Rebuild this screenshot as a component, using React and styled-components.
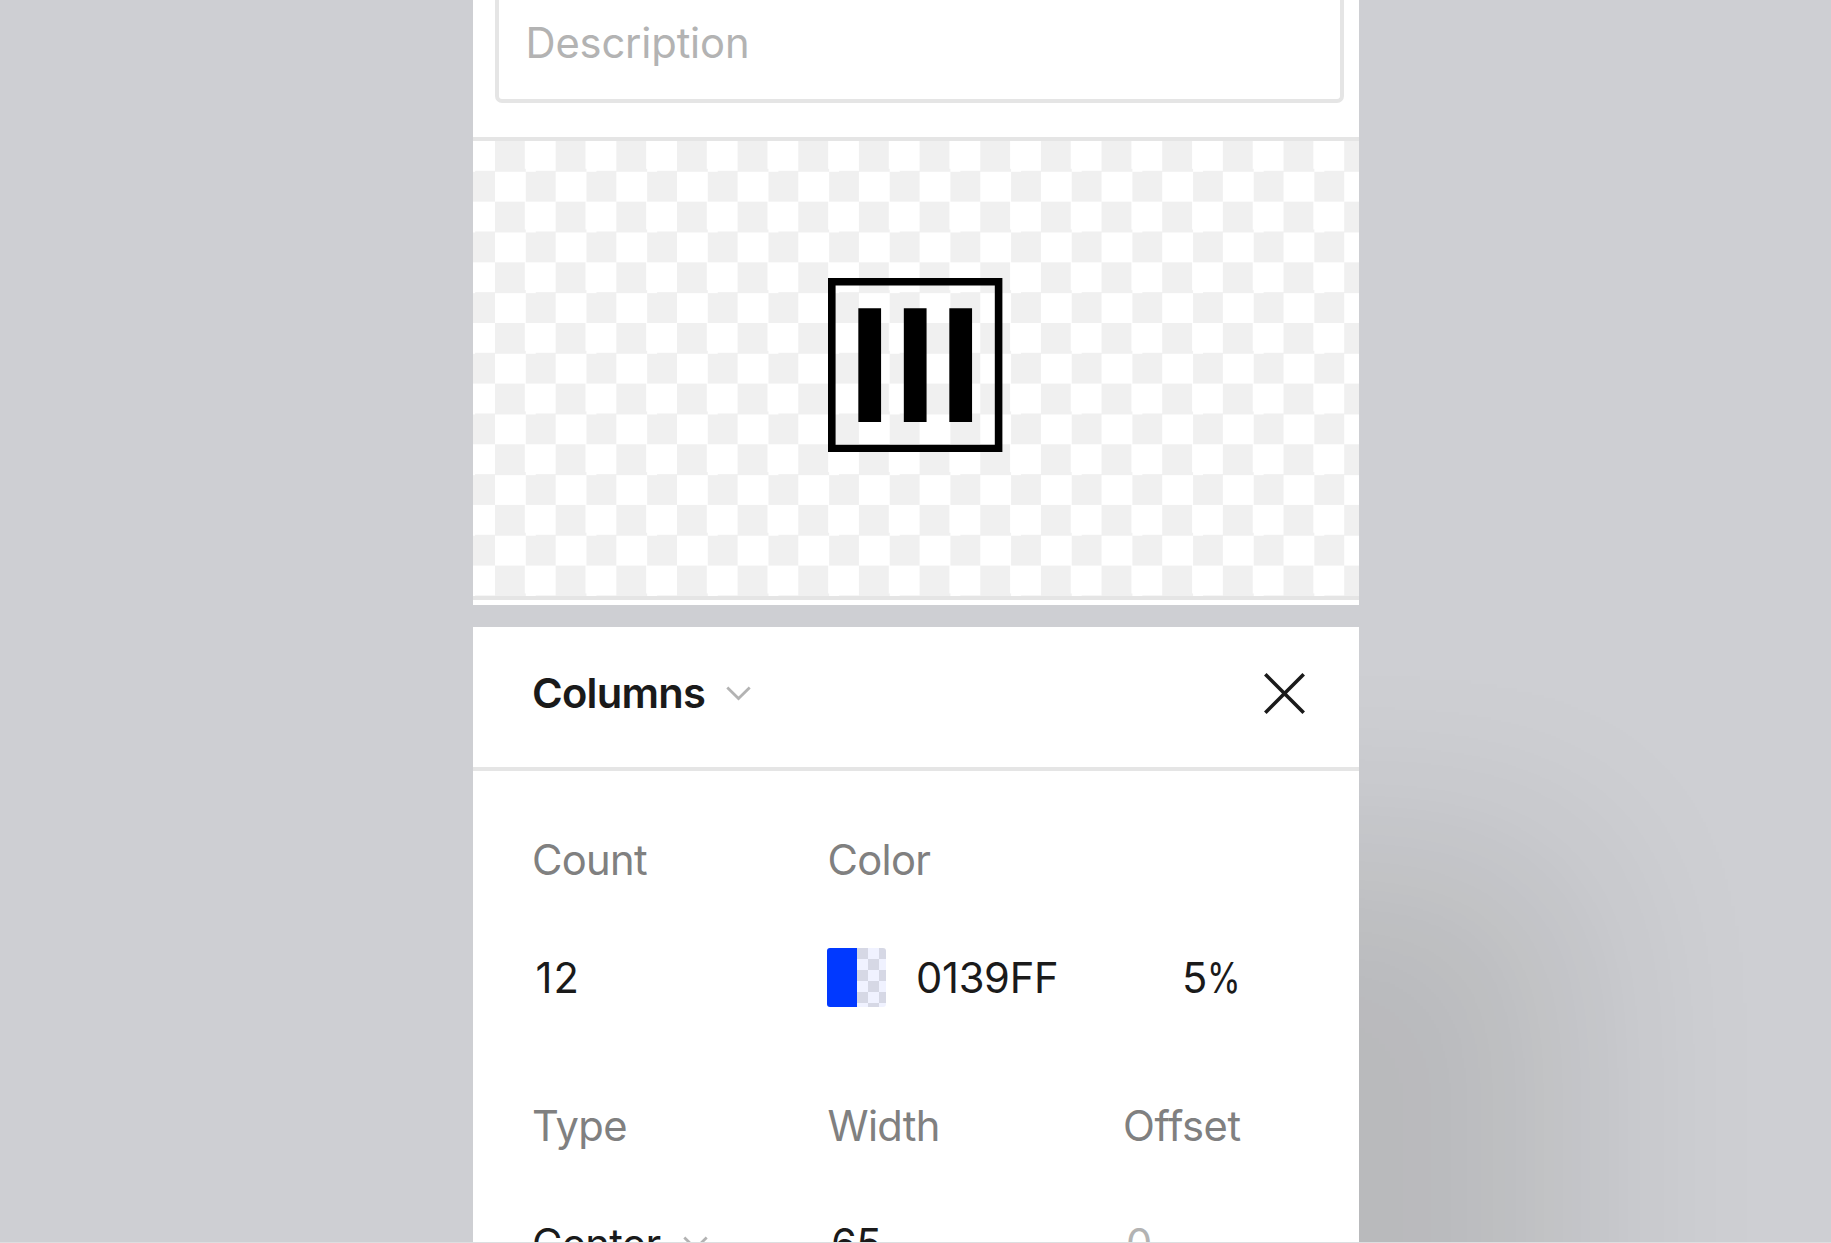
import React from "react";
import styled, { createGlobalStyle } from "styled-components";

const Global = createGlobalStyle`
  html, body { margin: 0; background: #cecfd3; }
  * { box-sizing: border-box; }
`;

const Page = styled.main`
  height: 1243px;
  overflow: hidden;
  display: flex;
  flex-direction: column;
  align-items: center;
  gap: 22.6px;
  background: #cecfd3;
  border-bottom: 1px solid #dddee0;
  font-family: Inter, "Liberation Sans", sans-serif;
  font-size: 41.7px;
  line-height: 60px;
  color: #1a1a1a;
`;

const Panel = styled.section`
  width: 886px;
  flex: none;
  background: #fff;
`;

const AssetPanel = styled(Panel)`
  height: 604.7px;
`;

const GridPanel = styled(Panel)`
  height: 640px;
  letter-spacing: -0.7px;
  box-shadow: 212px 225px 190px rgba(20, 20, 0, 0.108);
`;

const FieldArea = styled.div`
  height: 137px;
  padding: 0 15px 34px 22px;
`;

const DescriptionField = styled.div`
  height: 103px;
  padding: 13px 27px 0;
  border: 4px solid #e5e5e5;
  border-top: 0;
  border-radius: 0 0 7px 7px;
  color: #b3b3b3;
  letter-spacing: -0.15px;
`;

const Preview = styled.div`
  height: 463px;
  padding-bottom: 7px;
  display: flex;
  align-items: center;
  justify-content: center;
  border-top: 4px solid #e5e5e5;
  border-bottom: 4px solid #e5e5e5;
  background: repeating-conic-gradient(#fff 0 25%, #f0f0f0 0 50%) 22px 0 / 60.667px 60.667px;
`;

const Header = styled.header`
  height: 143.5px;
  padding: 0 54px 8px 59.5px;
  display: flex;
  align-items: center;
  border-bottom: 4px solid #e5e5e5;
`;

const Title = styled.h2`
  margin: 0 auto 0 0;
  display: flex;
  align-items: center;
  gap: 21px;
  font-size: inherit;
  font-weight: 600;
  letter-spacing: -0.75px;
`;

const Settings = styled.div`
  display: flex;
  flex-direction: column;
  gap: 88px;
  padding: 59px 0 0 59px;
`;

const Group = styled.div`
  display: grid;
  grid-template-columns: 295.5px 295.5px 1fr;
  grid-auto-rows: 60px;
  row-gap: 58px;
`;

const Label = styled.span`
  padding-left: 0.5px;
  color: #808080;
  grid-column: ${(p) => (p.$wide ? "span 2" : "auto")};
  letter-spacing: ${(p) => p.$tracking || -0.7}px;
`;

const Value = styled.span`
  display: flex;
  align-items: center;
  padding-left: ${(p) => p.$inset || 0}px;
  gap: ${(p) => p.$gap || 0}px;
  color: ${(p) => (p.$muted ? "#b3b3b3" : "#1a1a1a")};
`;

const Count = styled(Value)`
  letter-spacing: 1px;
`;

const ColorValue = styled(Value)`
  grid-column: span 2;
`;

const Hex = styled.span`
  width: 236px;
  letter-spacing: -0.3px;
`;

const Percent = styled.span`
  display: inline-block;
  transform: scaleX(0.82);
  transform-origin: left;
`;

const Swatch = styled.span`
  width: 59px;
  height: 59px;
  display: flex;
  border-radius: 3px;
  overflow: hidden;
`;

const Solid = styled.span`
  flex: 1;
  background: #0139ff;
`;

const Translucent = styled.span`
  flex: 1;
  background: repeating-conic-gradient(#f0f2ff 0 25%, #d6d8e5 0 50%) 0 0 / 22px 22px;
`;

const Chevron = () => (
  <svg width="25" height="15" viewBox="0 0 25 15" fill="none">
    <path d="M1.3 1.5 12.5 12.5 23.7 1.5" stroke="#b3b3b3" strokeWidth="2.8" />
  </svg>
);

const Close = () => (
  <svg width="41" height="41" viewBox="0 0 41 41" fill="none">
    <path d="M1.3 1.3 39.7 39.7M39.7 1.3 1.3 39.7" stroke="#1a1a1a" strokeWidth="3.6" />
  </svg>
);

const ColumnsIcon = () => (
  <svg width="174.4" height="174.4" viewBox="0 0 23 23">
    <path d="M.5.5h22v22H.5z" fill="none" stroke="#000" />
    <path d="M4 4h3v15H4zM10 4h3v15h-3zM16 4h3v15h-3z" />
  </svg>
);

export default function App() {
  return (
    <>
      <Global />
      <Page>
        <AssetPanel>
          <FieldArea>
            <DescriptionField>Description</DescriptionField>
          </FieldArea>
          <Preview>
            <ColumnsIcon />
          </Preview>
        </AssetPanel>
        <GridPanel>
          <Header>
            <Title>
              Columns
              <Chevron />
            </Title>
            <Close />
          </Header>
          <Settings>
            <Group>
              <Label>Count</Label>
              <Label $wide>Color</Label>
              <Count $inset={4}>12</Count>
              <ColorValue $gap={30}>
                <Swatch>
                  <Solid />
                  <Translucent />
                </Swatch>
                <Hex>0139FF</Hex>
                <span>
                  5<Percent>%</Percent>
                </span>
              </ColorValue>
            </Group>
            <Group>
              <Label>Type</Label>
              <Label>Width</Label>
              <Label $tracking={-0.4}>Offset</Label>
              <Value $inset={0.5} $gap={22.5}>
                Center
                <Chevron />
              </Value>
              <Value $inset={4}>65</Value>
              <Value $inset={3.5} $muted>0</Value>
            </Group>
          </Settings>
        </GridPanel>
      </Page>
    </>
  );
}
